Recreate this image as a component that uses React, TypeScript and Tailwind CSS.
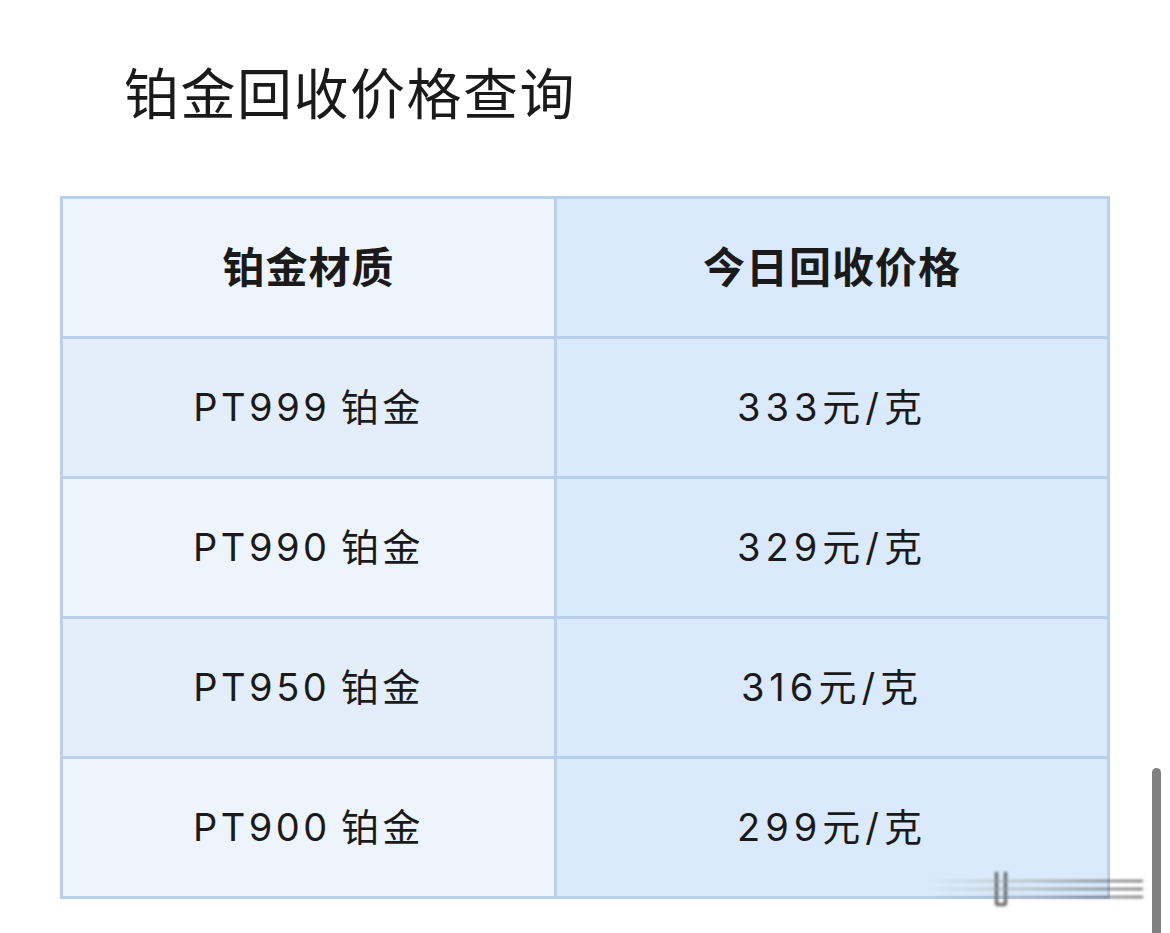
import React from "react";

const rows = [
  { name: "PT999", price: "333" },
  { name: "PT990", price: "329" },
  { name: "PT950", price: "316" },
  { name: "PT900", price: "299" },
];

const font = "font-['Inter','Noto_Sans_CJK_SC',sans-serif]";

const App: React.FC = () => {
  return (
    <div className={`relative w-[1170px] h-[933px] overflow-hidden bg-white text-[#1a1a1a] ${font}`}>
      {/* Title */}
      <h1 className="pl-[124px] pt-[67px] text-[55px] leading-none tracking-[1.5px] font-normal">
        铂金回收价格查询
      </h1>

      {/* Price table */}
      <div className="pl-[60px] pt-[74px]">
        <table className="w-[1050px] border-collapse border-[3px] border-[#b8d0e9] table-fixed">
          <colgroup>
            <col className="w-[494px]" />
            <col />
          </colgroup>
          <thead>
            <tr className="h-[140px]">
              <th className="border-[3px] border-[#b8d0e9] bg-[#edf4fc] text-[42px] font-bold tracking-[1px]">
                铂金材质
              </th>
              <th className="border-[3px] border-[#b8d0e9] bg-[#daeafc] text-[42px] font-bold tracking-[1px]">
                今日回收价格
              </th>
            </tr>
          </thead>
          <tbody>
            {rows.map((r, i) => (
              <tr key={r.name} className="h-[140px]">
                <td
                  className={`border-[3px] border-[#b8d0e9] text-center text-[38px] tracking-[3.5px] ${
                    i % 2 === 0 ? "bg-[#e3eefa]" : "bg-[#edf4fc]"
                  }`}
                >
                  {r.name}{"\u2009"}铂金
                </td>
                <td className="border-[3px] border-[#b8d0e9] bg-[#daeafc] text-center text-[38px] tracking-[5px]">
                  {r.price}元/克
                </td>
              </tr>
            ))}
          </tbody>
        </table>
      </div>

      {/* blurred watermark */}
      <div className="absolute left-[925px] top-[872px] w-[220px] h-[34px] blur-[1.5px] opacity-80">
        <div className="absolute left-[70px] top-[0px] w-[12px] h-[34px] border-x-[3px] border-b-[3px] border-[#333] rounded-b-[3px]" />
        <div className="absolute left-[0px] top-[8px] w-[218px] h-[2px] bg-gradient-to-r from-transparent via-[#999] to-[#222]" />
        <div className="absolute left-[0px] top-[16px] w-[218px] h-[2px] bg-gradient-to-r from-transparent via-[#999] to-[#222]" />
        <div className="absolute left-[0px] top-[24px] w-[218px] h-[2px] bg-gradient-to-r from-transparent via-[#999] to-[#222]" />
      </div>

      {/* scrollbar */}
      <div className="absolute left-[1152px] top-[768px] w-[9px] h-[200px] rounded-full bg-[#808080]" />
    </div>
  );
};

export default App;
